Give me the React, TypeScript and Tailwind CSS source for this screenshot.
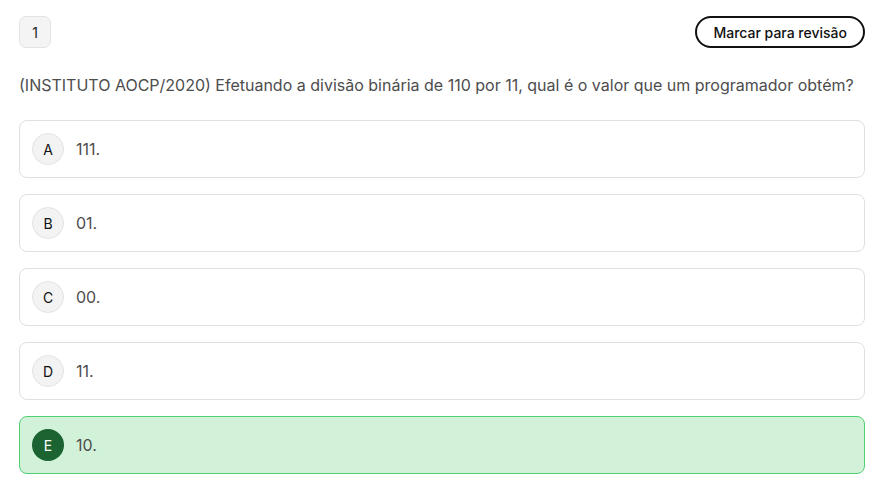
import React from "react";

const options = [
  { l: "A", t: "111." },
  { l: "B", t: "01." },
  { l: "C", t: "00." },
  { l: "D", t: "11." },
  { l: "E", t: "10.", selected: true },
];

export default function App() {
  return (
    <div
      className="min-h-screen bg-white pl-[19px] pr-[16px] pt-[16px]"
      style={{ fontFamily: "Inter, 'Noto Sans', sans-serif" }}
    >
      <div className="flex items-center justify-between">
        <div className="flex h-[32px] w-[32px] items-center justify-center rounded-[7px] border border-[#e3e3e3] bg-[#f4f4f4] text-[14px] text-[#222]">
          1
        </div>
        <button className="flex h-[32px] items-center rounded-full border-2 border-[#111] px-[16px] text-[14px] font-medium text-[#111]">
          Marcar para revisão
        </button>
      </div>
      <p className="mt-[25px] text-[16px] leading-[24px] text-[#4d4d4d]">
        (INSTITUTO AOCP/2020) Efetuando a divisão binária de 110 por 11, qual é o valor que um programador obtém?
      </p>
      <div className="mt-[23px] flex flex-col gap-[16px]">
        {options.map((o) => (
          <div
            key={o.l}
            className={
              o.selected
                ? "flex items-center gap-3 rounded-[8px] border border-[#4fd173] bg-[#d1f2d9] px-[12px] py-[12px]"
                : "flex items-center gap-3 rounded-[8px] border border-[#e0e0e0] bg-white px-[12px] py-[12px]"
            }
          >
            <div
              className={
                o.selected
                  ? "flex h-[32px] w-[32px] items-center justify-center rounded-full bg-[#1b6330] text-[14px] text-white"
                  : "flex h-[32px] w-[32px] items-center justify-center rounded-full border border-[#e2e2e2] bg-[#f3f3f3] text-[14px] text-[#111]"
              }
            >
              {o.l}
            </div>
            <span className="text-[16px] text-[#4d4d4d]">{o.t}</span>
          </div>
        ))}
      </div>
    </div>
  );
}
